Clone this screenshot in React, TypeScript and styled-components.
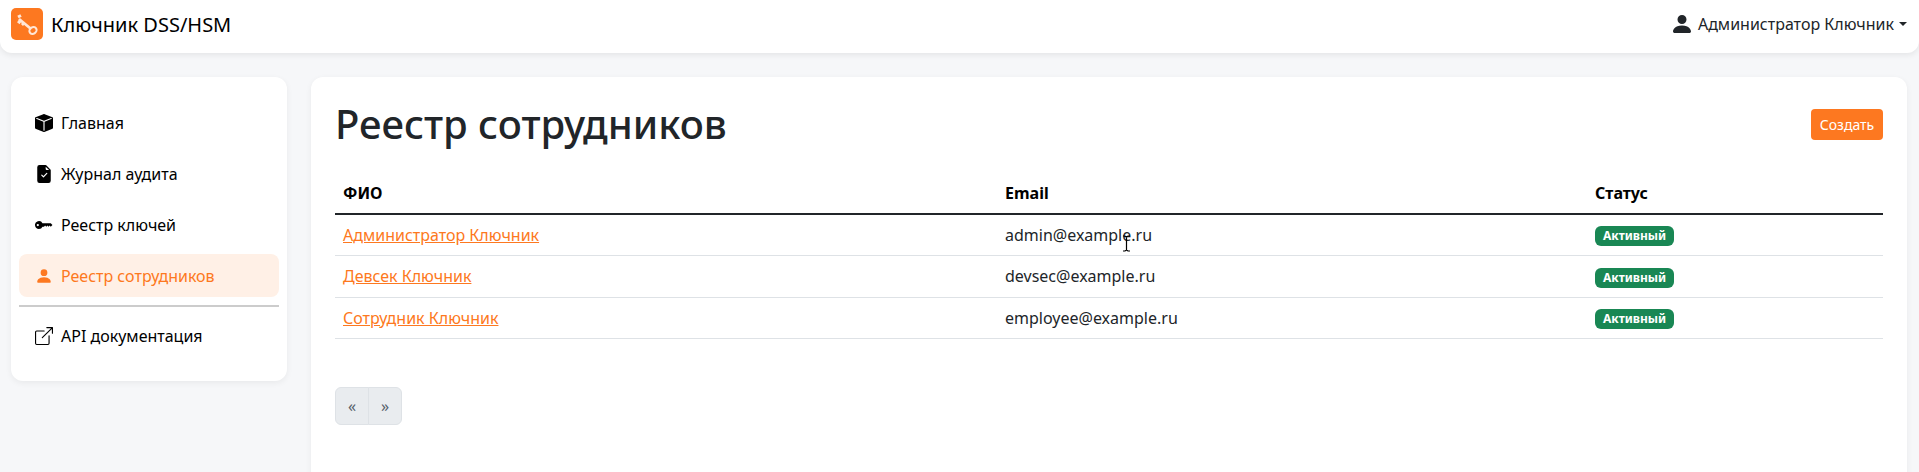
import React from "react";
import styled, { createGlobalStyle } from "styled-components";
import {
  BsBoxFill,
  BsBoxArrowUpRight,
  BsFileEarmarkCheckFill,
  BsKeyFill,
  BsPersonFill,
} from "react-icons/bs";

const ORANGE = "#fd7820";

const employees = [
  { name: "Администратор Ключник", email: "admin@example.ru" },
  { name: "Девсек Ключник", email: "devsec@example.ru" },
  { name: "Сотрудник Ключник", email: "employee@example.ru" },
];

function LogoKey() {
  return (
    <svg width="32" height="32" viewBox="0 0 32 32" fill="none" stroke="#ffe6d6">
      <ellipse cx="22" cy="22.500" rx="3.800" ry="3.200" strokeWidth="2" transform="rotate(-35 22 22.500)" />
      <path d="M19.500 20.500 L8 11" strokeWidth="2.800" />
      <path d="M7 9 L10 7.500 M7 13 L9.500 15 M11 15 L13 17" strokeWidth="3" />
    </svg>
  );
}

function App() {
  return (
    <Page>
      <GlobalStyle />
      <Header>
        <Brand>
          <LogoBox>
            <LogoKey />
          </LogoBox>
          <BrandName>Ключник DSS/HSM</BrandName>
        </Brand>
        <UserMenu>
          <BsPersonFill size={24} />
          <span>Администратор Ключник</span>
          <Caret />
        </UserMenu>
      </Header>
      <Body>
        <Sidebar>
          <NavItem>
            <BsBoxFill size={18} />
            Главная
          </NavItem>
          <NavItem>
            <BsFileEarmarkCheckFill size={18} />
            Журнал аудита
          </NavItem>
          <NavItem>
            <BsKeyFill size={18} />
            Реестр ключей
          </NavItem>
          <NavItem $active>
            <BsPersonFill size={18} />
            Реестр сотрудников
          </NavItem>
          <Divider />
          <NavItem>
            <BsBoxArrowUpRight size={18} />
            API документация
          </NavItem>
        </Sidebar>
        <Main>
          <TitleRow>
            <Title>Реестр сотрудников</Title>
            <CreateButton>Создать</CreateButton>
          </TitleRow>
          <Table>
            <thead>
              <tr>
                <Th $width={662}>ФИО</Th>
                <Th $width={590}>Email</Th>
                <Th>Статус</Th>
              </tr>
            </thead>
            <tbody>
              {employees.map((e) => (
                <tr key={e.email}>
                  <Td>
                    <NameLink href="#">{e.name}</NameLink>
                  </Td>
                  <Td>{e.email}</Td>
                  <Td>
                    <Badge>Активный</Badge>
                  </Td>
                </tr>
              ))}
            </tbody>
          </Table>
          <Pagination>
            <PageButton $first>«</PageButton>
            <PageButton>»</PageButton>
          </Pagination>
        </Main>
      </Body>
      <TextCursor width="9" height="17" viewBox="0 0 9 17">
        <path d="M1 1h2l1.500 1L6 1h2M4.500 2v13M1 16h2l1.500-1L6 16h2" stroke="#000" strokeWidth="1.200" fill="none" />
      </TextCursor>
    </Page>
  );
}

const GlobalStyle = createGlobalStyle`
  html, body {
    margin: 0;
    height: 100%;
    overflow: hidden;
    background: #f6f7f9;
    font-family: "Noto Sans", sans-serif;
    font-size: 16px;
    color: #212529;
  }
  * {
    box-sizing: border-box;
  }
`;

const Page = styled.div`
  position: relative;
  height: 100vh;
  overflow: hidden;
`;

const Header = styled.header`
  display: flex;
  align-items: center;
  justify-content: space-between;
  height: 53px;
  padding: 0 12px 5px 11px;
  background: #fff;
  border-radius: 0 0 12px 12px;
  box-shadow: 0 2px 6px rgba(0, 0, 0, 0.08);
`;

const Brand = styled.div`
  display: flex;
  align-items: center;
  gap: 8px;
`;

const LogoBox = styled.div`
  display: flex;
  width: 32px;
  height: 32px;
  background: ${ORANGE};
  border-radius: 5px;
`;

const BrandName = styled.span`
  font-size: 20px;
  color: #000;
`;

const UserMenu = styled.div`
  display: flex;
  align-items: center;
  gap: 4px;
  font-size: 16px;
`;

const Caret = styled.i`
  width: 0;
  height: 0;
  margin-left: 1px;
  border-top: 4.800px solid #212529;
  border-left: 4.800px solid transparent;
  border-right: 4.800px solid transparent;
`;

const Body = styled.div`
  display: flex;
  align-items: flex-start;
  gap: 24px;
  padding: 24px 12px 0 11px;
`;

const Sidebar = styled.nav`
  display: flex;
  flex-direction: column;
  flex: 0 0 276px;
  height: 304px;
  padding: 24px 8px;
  background: #fff;
  border-radius: 12px;
  box-shadow: 0 2px 6px rgba(0, 0, 0, 0.06);
`;

const NavItem = styled.a<{ $active?: boolean }>`
  display: flex;
  align-items: center;
  gap: 8px;
  height: 43px;
  margin-bottom: 8px;
  padding: 0 16px;
  border-radius: 8px;
  font-size: 16px;
  color: ${(p) => (p.$active ? ORANGE : "#000")};
  background: ${(p) => (p.$active ? "#fff0e6" : "transparent")};

  &:last-child {
    margin-bottom: 0;
  }
`;

const Divider = styled.hr`
  width: 100%;
  margin: 0 0 7px;
  border: 0;
  border-top: 2px solid #ccc;
`;

const Main = styled.main`
  flex: 1;
  height: 420px;
  padding: 15px 24px 24px;
  background: #fff;
  border-radius: 12px;
  box-shadow: 0 2px 6px rgba(0, 0, 0, 0.06);
`;

const TitleRow = styled.div`
  display: flex;
  align-items: center;
  justify-content: space-between;
  height: 64px;
  margin-bottom: 16px;
`;

const Title = styled.h1`
  margin: 0;
  font-size: 40px;
  font-weight: 500;
  line-height: 1.2;
`;

const CreateButton = styled.button`
  width: 72px;
  height: 31px;
  padding: 0;
  border: 0;
  border-radius: 4px;
  background: ${ORANGE};
  color: #fff;
  font-family: inherit;
  font-size: 14px;
`;

const Table = styled.table`
  width: 100%;
  table-layout: fixed;
  border-collapse: collapse;
`;

const Th = styled.th<{ $width?: number }>`
  width: ${(p) => (p.$width ? `${p.$width}px` : "auto")};
  height: 42px;
  padding: 8px;
  border-bottom: 2px solid #212529;
  color: #000;
  font-weight: 700;
  text-align: left;
`;

const Td = styled.td`
  height: 41.500px;
  padding: 8px;
  border-bottom: 1px solid #dee2e6;
  color: #212529;
`;

const NameLink = styled.a`
  color: ${ORANGE};
  text-decoration: underline;
`;

const Badge = styled.span`
  display: inline-block;
  padding: 3px 8px;
  border-radius: 6px;
  background: #198754;
  color: #fff;
  font-size: 12px;
  font-weight: 700;
  line-height: 14px;
  vertical-align: middle;
`;

const Pagination = styled.div`
  display: flex;
  margin-top: 48px;
`;

const PageButton = styled.span<{ $first?: boolean }>`
  display: flex;
  align-items: center;
  justify-content: center;
  width: 34px;
  height: 38px;
  background: #e9ecef;
  border: 1px solid #dee2e6;
  border-radius: ${(p) => (p.$first ? "6px 0 0 6px" : "0 6px 6px 0")};
  margin-left: ${(p) => (p.$first ? "0" : "-1px")};
  color: #56606a;
  font-size: 16px;
`;

const TextCursor = styled.svg`
  position: absolute;
  left: 1122px;
  top: 235px;
`;

export default App;
